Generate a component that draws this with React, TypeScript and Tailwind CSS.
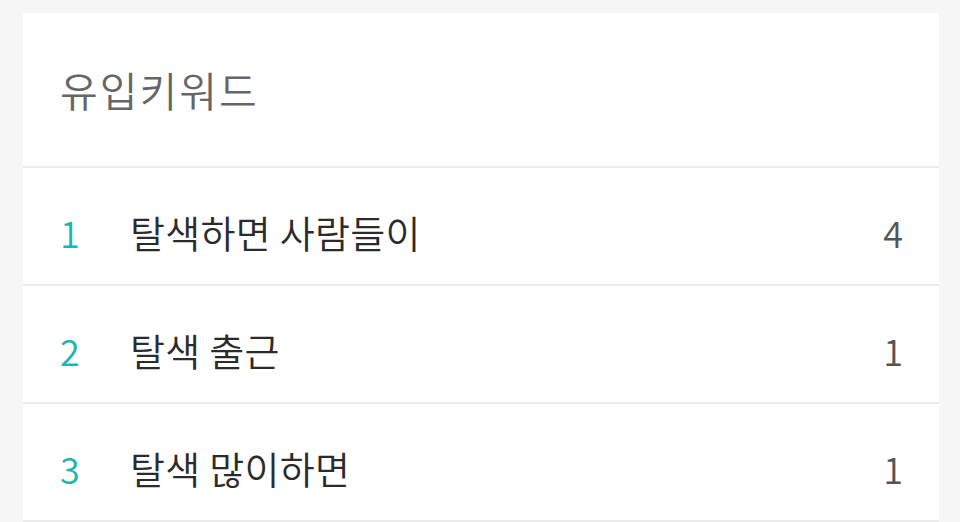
const keywords = [
  { rank: 1, word: '탈색하면 사람들이', count: 4 },
  { rank: 2, word: '탈색 출근', count: 1 },
  { rank: 3, word: '탈색 많이하면', count: 1 },
];

export default function App() {
  return (
    <div
      className="min-h-[522px] bg-[#f6f6f6] pt-[13px] pl-[23px] pr-[21px]"
      style={{ fontFamily: '"Noto Sans CJK KR", "Noto Sans", sans-serif' }}
    >
      <div className="bg-white">
        {/* Header */}
        <div className="flex h-[155px] items-center border-b-2 border-[#ececec] pl-[37px]">
          <h2 className="text-[41px] font-[350] leading-none tracking-[2px] text-[#666666]">유입키워드</h2>
        </div>

        {/* Keyword rows */}
        {keywords.map((k) => (
          <div
            key={k.rank}
            className="flex h-[118px] items-center border-b-2 border-[#ececec] pl-[37px] pr-[36px] pt-[12px]"
          >
            <span className="w-[70px] text-[36px] font-[350] leading-none text-[#1db5b0]">{k.rank}</span>
            <span className="flex-1 text-[38px] font-[350] leading-none tracking-[0.3px] text-[#2b2b2b]">
              {k.word}
            </span>
            <span className="text-[36px] font-[350] leading-none text-[#555555]">{k.count}</span>
          </div>
        ))}
      </div>
    </div>
  );
}
